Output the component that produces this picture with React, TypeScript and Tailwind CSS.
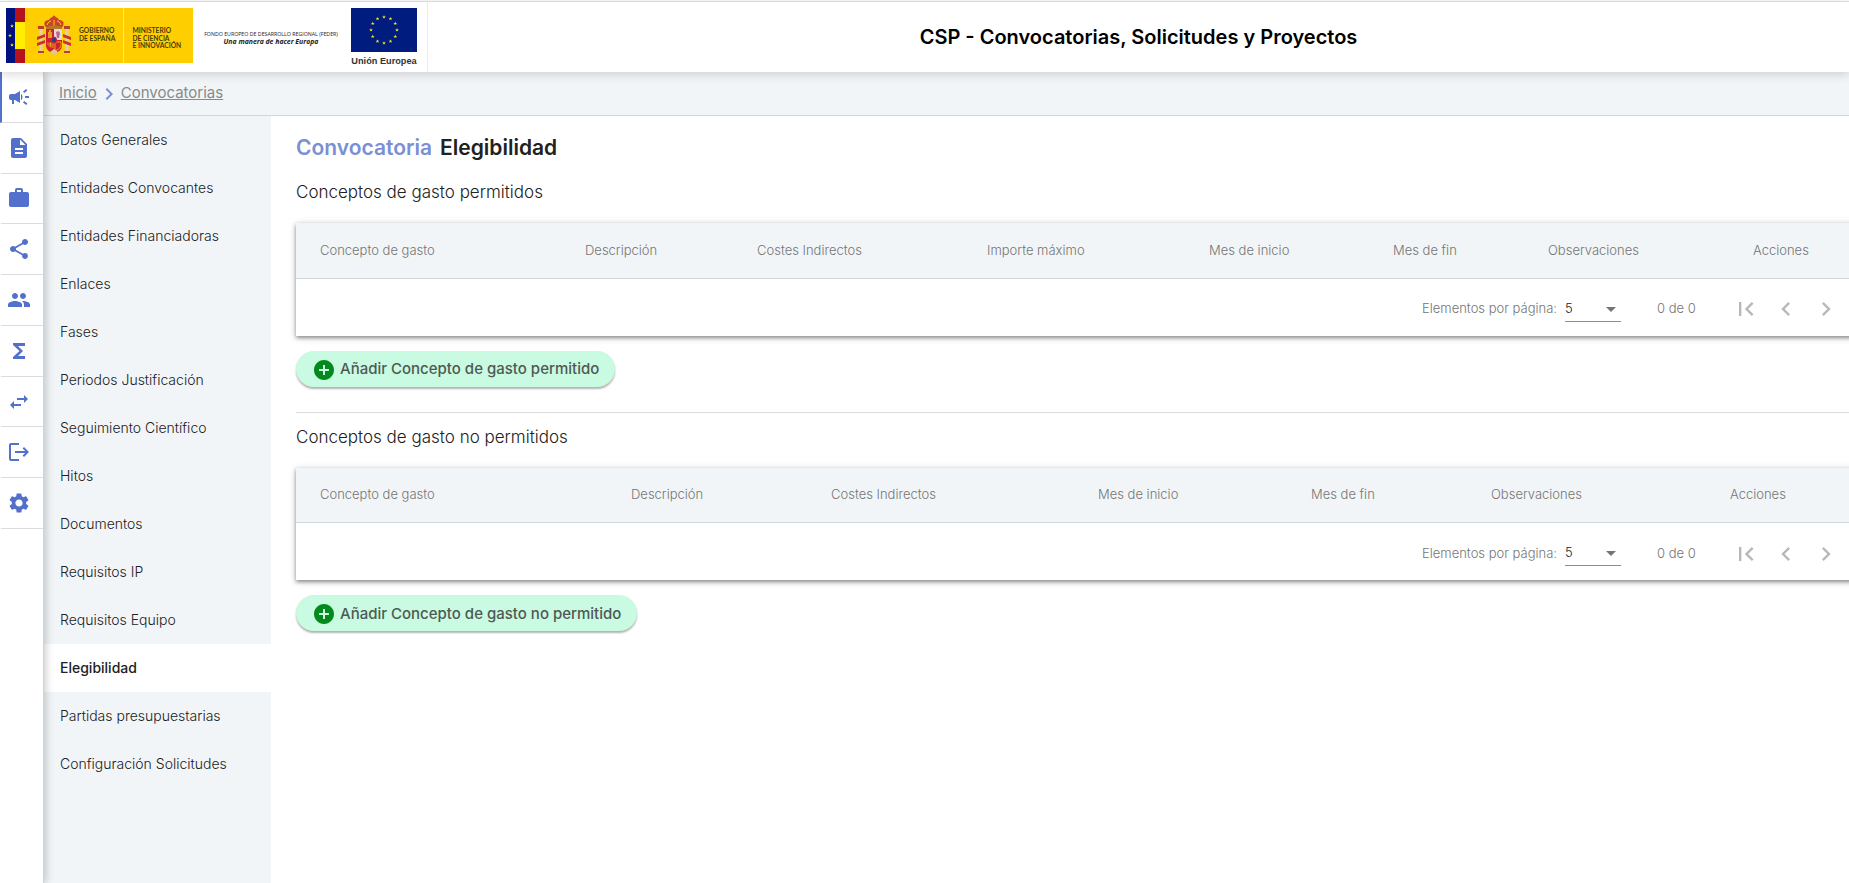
import type { ReactNode } from "react";
import {
  MdAddCircle,
  MdCampaign,
  MdDescription,
  MdFunctions,
  MdLogout,
  MdPeople,
  MdSettings,
  MdShare,
  MdSwapHoriz,
  MdWork,
  MdArrowDropDown,
  MdChevronLeft,
  MdChevronRight,
  MdFirstPage,
  MdLastPage,
} from "react-icons/md";

const modules = [
  { label: "Convocatorias", icon: MdCampaign, active: true },
  { label: "Solicitudes", icon: MdDescription },
  { label: "Proyectos", icon: MdWork },
  { label: "Relaciones", icon: MdShare },
  { label: "Grupos", icon: MdPeople },
  { label: "Ejecución económica", icon: MdFunctions },
  { label: "Intercambio", icon: MdSwapHoriz },
  { label: "Salida", icon: MdLogout },
  { label: "Configuración", icon: MdSettings },
];

const sections = [
  "Datos Generales",
  "Entidades Convocantes",
  "Entidades Financiadoras",
  "Enlaces",
  "Fases",
  "Periodos Justificación",
  "Seguimiento Científico",
  "Hitos",
  "Documentos",
  "Requisitos IP",
  "Requisitos Equipo",
  "Elegibilidad",
  "Partidas presupuestarias",
  "Configuración Solicitudes",
];

type Column = { label: string; width: string };

const allowedColumns: Column[] = [
  { label: "Concepto de gasto", width: "w-[289px]" },
  { label: "Descripción", width: "w-[172px]" },
  { label: "Costes Indirectos", width: "w-[230px]" },
  { label: "Importe máximo", width: "w-[222px]" },
  { label: "Mes de inicio", width: "w-[184px]" },
  { label: "Mes de fin", width: "w-[155px]" },
  { label: "Observaciones", width: "w-[205px]" },
  { label: "Acciones", width: "w-auto" },
];

const disallowedColumns: Column[] = [
  { label: "Concepto de gasto", width: "w-[335px]" },
  { label: "Descripción", width: "w-[200px]" },
  { label: "Costes Indirectos", width: "w-[267px]" },
  { label: "Mes de inicio", width: "w-[213px]" },
  { label: "Mes de fin", width: "w-[180px]" },
  { label: "Observaciones", width: "w-[239px]" },
  { label: "Acciones", width: "w-auto" },
];

const starPoints = "0,-2 0.5,-0.6 1.9,-0.6 0.8,0.25 1.2,1.6 0,0.8 -1.2,1.6 -0.8,0.25 -1.9,-0.6 -0.5,-0.6";

function GovernmentLogo() {
  return (
    <svg viewBox="0 0 187 55" className="h-[55px] w-[187px] shrink-0" role="img" aria-label="Gobierno de España, Ministerio de Ciencia e Innovación">
      <rect width="187" height="55" fill="#ffce00" />
      <rect width="9" height="55" fill="#00127f" />
      <rect x="9" width="10" height="55" fill="#b5121b" />
      <rect x="9" y="14" width="10" height="27" fill="#ffee00" />
      <g fill="#ffe600">
        <polygon points={starPoints} transform="translate(6 18)" />
        <polygon points={starPoints} transform="translate(4 27.500)" />
        <polygon points={starPoints} transform="translate(6 37)" />
      </g>
      <g transform="translate(1 0)">
        <path d="M38 18c-2-4 1-6 4-6 1-2 2-3 5-3s4 1 5 3c3 0 6 2 4 6l-2 3H40z" fill="#c8452c" />
        <path d="M40 17c1-3 3-4 4-4M54 17c-1-3-3-4-4-4M47 12v6" stroke="#ffce00" fill="none" />
        <path d="M39 19q8-3 16 0v2H39z" fill="#b77a22" />
        <circle cx="47" cy="9" r="1.500" fill="#c8452c" />
        <rect x="32.500" y="21" width="3" height="22" fill="#ddd1b0" />
        <rect x="58.500" y="21" width="3" height="22" fill="#ddd1b0" />
        <path d="M31 18h6v3h-6zM57 18h6v3h-6zM31 43h6v2h-6zM57 43h6v2h-6z" fill="#b5402c" />
        <path d="M30 29l8-3v3l-8 3zM30 35l8-3v3l-8 3zM64 29l-8-3v3l8 3zM64 35l-8-3v3l8 3z" fill="#c8342c" />
        <path d="M39 21h16v17q-1 6-8 7-7-1-8-7z" fill="#cf202c" />
        <path d="M47 21h8v11h-8z" fill="#e7d8dc" />
        <path d="M49 24q3-2 4 1l-1 5h-2z" fill="#b56d8c" />
        <path d="M41 24h4v6h-4zM42 22h2v2h-2z" fill="#e99b1c" />
        <path d="M40 34h7v7q-5-1-7-4zM42 34v6M45 34v7" fill="#e8a01c" stroke="#cf202c" />
        <path d="M48 34h6v4q-2 4-6 5z" fill="#cf202c" stroke="#e8a01c" />
        <ellipse cx="47" cy="32" rx="2.500" ry="3" fill="#2c3c8c" stroke="#cf202c" />
        <path d="M43 44l4-3 4 3-4 3z" fill="#dac7a0" />
      </g>
      <path d="M117.500 0v55" stroke="#ffe583" />
      <g fill="#4a3c08" fontFamily="Lato, sans-serif" fontSize="6.700" fontWeight="700">
        <text x="73" y="25">GOBIERNO</text>
        <text x="73" y="33">DE ESPAÑA</text>
        <text x="126.500" y="25">MINISTERIO</text>
        <text x="126.500" y="33">DE CIENCIA</text>
        <text x="126.500" y="40">E INNOVACIÓN</text>
      </g>
    </svg>
  );
}

function RegionalFundLogo() {
  return (
    <svg viewBox="0 0 138 20" className="h-5 w-[138px]" role="img" aria-label="Fondo Europeo de Desarrollo Regional">
      <g fill="#1c1c1c" textAnchor="middle" fontFamily="Open Sans, sans-serif">
        <text x="69" y="8" fontSize="5.250">FONDO EUROPEO DE DESARROLLO REGIONAL (FEDER)</text>
        <text x="69" y="16" fontSize="6.900" fontWeight="700" fontStyle="italic">Una manera de hacer Europa</text>
      </g>
    </svg>
  );
}

function EuropeanUnionLogo() {
  return (
    <svg viewBox="0 0 68 60" className="h-[60px] w-[68px]" role="img" aria-label="Unión Europea">
      <rect x="1" width="66" height="44" fill="#001c7f" />
      <g fill="#f0e81c">
        {Array.from({ length: 12 }, (_, i) => {
          const angle = (i * Math.PI) / 6;
          return (
            <polygon
              key={i}
              points={starPoints}
              transform={`translate(${34 + 13 * Math.sin(angle)} ${22 - 13 * Math.cos(angle)})`}
            />
          );
        })}
      </g>
      <text x="34" y="56" textAnchor="middle" fill="#333" fontFamily="Liberation Sans, sans-serif" fontSize="9.200" fontWeight="700">
        Unión Europea
      </text>
    </svg>
  );
}

function PageButton({ label, children }: { label: string; children: ReactNode }) {
  return (
    <button type="button" disabled aria-label={label} className="flex size-10 items-center justify-center text-[28px] text-[#b8b8b8]">
      {children}
    </button>
  );
}

function ExpenseTable({ id, title, columns, action }: { id: string; title: string; columns: Column[]; action: string }) {
  return (
    <section>
      <h2 className="text-[17px] leading-6 font-light text-[#212121]">{title}</h2>
      <div className="mt-[19px] -mr-[70px] bg-white shadow-[0_2px_4px_rgba(0,0,0,0.4),0_1px_8px_rgba(0,0,0,0.14)]">
        <table className="w-full table-fixed">
          <thead>
            <tr className="h-[55px] border-b border-[#cfd6db] bg-[#f1f5f8]">
              {columns.map((column) => (
                <th key={column.label} scope="col" className={`${column.width} p-0 text-left text-[13px] font-light text-[#757575] first:pl-6`}>
                  {column.label}
                </th>
              ))}
            </tr>
          </thead>
        </table>
        <div className="flex h-[57px] items-center justify-end pt-1 pr-2 text-[13px] font-light text-[#757575]">
          <label htmlFor={id}>Elementos por página:</label>
          <div className="relative ml-2 w-14 border-b border-[#8c8c8c]">
            <select id={id} defaultValue="5" className="h-6 w-full appearance-none bg-transparent text-[#212121]">
              <option>5</option>
              <option>10</option>
              <option>25</option>
            </select>
            <MdArrowDropDown className="pointer-events-none absolute top-0 -right-0.5 size-6 text-[#757575]" />
          </div>
          <span className="mr-8 ml-9 w-[37px] whitespace-nowrap">0 de 0</span>
          <PageButton label="Primera página"><MdFirstPage /></PageButton>
          <PageButton label="Página anterior"><MdChevronLeft /></PageButton>
          <PageButton label="Página siguiente"><MdChevronRight /></PageButton>
          <PageButton label="Última página"><MdLastPage /></PageButton>
        </div>
      </div>
      <button type="button" className="mt-[15px] flex h-9 items-center gap-1 rounded-full bg-[#c8fbe1] px-4 pt-0.5 text-[15px] font-medium text-[#505854] shadow-[0_2px_2px_rgba(0,0,0,0.3)]">
        <MdAddCircle className="size-6 text-[#048a1c]" />
        {action}
      </button>
    </section>
  );
}

export default function App() {
  return (
    <div className="flex h-screen flex-col overflow-hidden bg-white font-['Inter',sans-serif] text-[#212121]">
      <header className="relative z-20 mt-px flex h-[71px] shrink-0 border-t border-[#d8dcdc] bg-white shadow-[0_2px_10px_rgba(0,0,0,0.16)]">
        <div className="flex items-start border-r border-[#ececec] pt-1.5 pr-[9px] pl-1.5">
          <GovernmentLogo />
          <div className="ml-[9px] pt-5">
            <RegionalFundLogo />
          </div>
          <div className="ml-2.5">
            <EuropeanUnionLogo />
          </div>
        </div>
        <h1 className="flex flex-1 items-center justify-center text-xl font-semibold text-black">CSP - Convocatorias, Solicitudes y Proyectos</h1>
      </header>

      <div className="flex min-h-0 flex-1">
        <nav aria-label="Módulos" className="relative z-10 w-11 shrink-0 border-r border-[#d0d4d7] bg-white shadow-[2px_0_8px_rgba(0,0,0,0.2)]">
          <div className="flex h-[457px] flex-col">
            {modules.map(({ label, icon: Icon, active }) => (
              <a
                key={label}
                href="#"
                aria-label={label}
                className={`flex flex-1 items-center border-b border-b-[#dcdcdc] border-l-2 pl-[5px] text-[#5371cc] ${active ? "border-l-[#5371cc]" : "border-l-transparent"}`}
              >
                <Icon className="size-6" />
              </a>
            ))}
          </div>
        </nav>

        <div className="flex min-w-0 flex-1 flex-col">
          <nav aria-label="Ruta" className="flex h-11 shrink-0 items-center border-b border-[#d2d6d9] bg-[#f1f5f8] pl-[15px] text-[15px] text-[#8a8a8a]">
            <a href="#" className="underline">Inicio</a>
            <MdChevronRight className="size-6 text-[#7a8fd6]" />
            <a href="#" className="underline">Convocatorias</a>
          </nav>
          <div className="flex min-h-0 flex-1">
            <nav aria-label="Secciones" className="w-[227px] shrink-0 bg-[#f1f5f8]">
              {sections.map((section) => (
                <a
                  key={section}
                  href="#"
                  className={`flex h-12 items-center pl-4 text-sm ${section === "Elegibilidad" ? "bg-white font-medium text-[#212121]" : "font-light text-[#212121]"}`}
                >
                  {section}
                </a>
              ))}
            </nav>
            <main className="min-w-0 flex-1 overflow-hidden px-[25px] pt-4">
              <h1 className="mb-[17px] text-[21px] leading-[31px] font-semibold">
                <span className="mr-2 text-[#7a8fd6]">Convocatoria</span>
                Elegibilidad
              </h1>
              <ExpenseTable id="allowed-size" title="Conceptos de gasto permitidos" columns={allowedColumns} action="Añadir Concepto de gasto permitido" />
              <hr className="mt-[25px] -mr-[70px] mb-3 border-[#dcdcdc]" />
              <ExpenseTable id="disallowed-size" title="Conceptos de gasto no permitidos" columns={disallowedColumns} action="Añadir Concepto de gasto no permitido" />
            </main>
          </div>
        </div>
      </div>
    </div>
  );
}
